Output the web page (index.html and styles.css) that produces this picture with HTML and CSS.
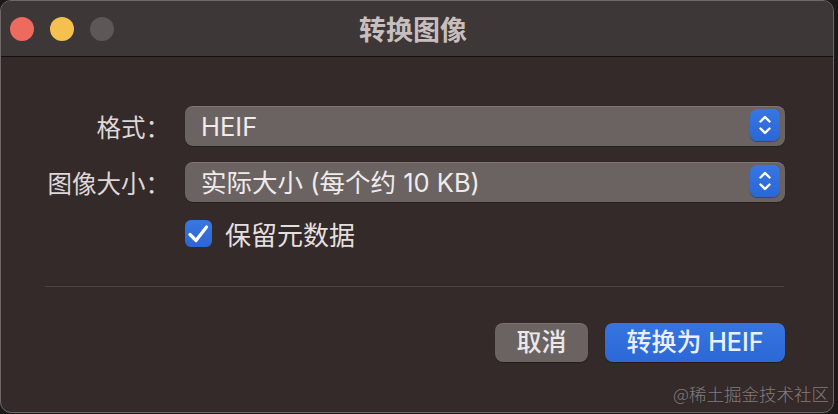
FILE: index.html
```html
<!DOCTYPE html>
<html lang="zh-CN">
<head>
<meta charset="utf-8">
<title>转换图像</title>
<link rel="stylesheet" href="styles.css">
</head>
<body>
<div class="window">
  <div class="titlebar">
    <div class="lights">
      <span class="light red"></span>
      <span class="light yellow"></span>
      <span class="light gray"></span>
    </div>
    <div class="title">转换图像</div>
  </div>
  <div class="content">
    <div class="form">
      <div class="label">格式：</div>
      <div class="popup">
        <span class="popup-text">HEIF</span>
        <span class="stepper">
          <svg viewBox="0 0 30 32" width="30" height="32"><path d="M10.5 12.5 L15 8 L19.5 12.5 M10.5 19.5 L15 24 L19.5 19.5" fill="none" stroke="#fff" stroke-width="2.4" stroke-linecap="round" stroke-linejoin="round"/></svg>
        </span>
      </div>
      <div class="label">图像大小：</div>
      <div class="popup">
        <span class="popup-text">实际大小 (每个约 10 KB)</span>
        <span class="stepper">
          <svg viewBox="0 0 30 32" width="30" height="32"><path d="M10.5 12.5 L15 8 L19.5 12.5 M10.5 19.5 L15 24 L19.5 19.5" fill="none" stroke="#fff" stroke-width="2.4" stroke-linecap="round" stroke-linejoin="round"/></svg>
        </span>
      </div>
      <div class="label"></div>
      <label class="check-row">
        <span class="checkbox">
          <svg viewBox="0 0 27 27" width="27" height="27"><path d="M5 14.5 L11 20.5 L21.5 7" fill="none" stroke="#fff" stroke-width="3.2" stroke-linecap="round" stroke-linejoin="round"/></svg>
        </span>
        <span class="check-text">保留元数据</span>
      </label>
    </div>
    <div class="separator"></div>
    <div class="buttons">
      <button class="btn cancel">取消</button>
      <button class="btn primary">转换为 HEIF</button>
    </div>
  </div>
  <div class="watermark">@稀土掘金技术社区</div>
</div>
</body>
</html>
```
FILE: styles.css
```css
* { box-sizing: border-box; }
html, body { margin: 0; padding: 0; }
body {
  width: 838px;
  height: 414px;
  background: #1d1919;
  font-family: Inter, "Noto Sans CJK SC", sans-serif;
  overflow: hidden;
}
.window {
  position: relative;
  width: 834px;
  height: 413px;
  background: #342a2a;
  border: 1px solid #6f6868;
  border-radius: 11px;
  overflow: hidden;
  display: flex;
  flex-direction: column;
}
.titlebar {
  position: relative;
  height: 56px;
  flex: none;
  background: #3d3737;
  border-bottom: 1px solid #141010;
  display: flex;
  align-items: center;
}
.lights {
  display: flex;
  gap: 16px;
  padding-left: 9px;
}
.light {
  width: 24px;
  height: 24px;
  border-radius: 50%;
  display: block;
}
.red { background: #ec6a5e; }
.yellow { background: #f4c04f; }
.gray { background: #5d5757; }
.title {
  position: absolute;
  left: 0;
  right: 0;
  top: 0;
  height: 55px;
  line-height: 55px;
  text-align: center;
  font-family: "Noto Sans CJK SC", sans-serif;
  font-weight: 700;
  font-size: 27px;
  color: #c7bfbf;
  padding-right: 8px;
}
.content {
  padding: 49px 50px 0 44px;
  display: flex;
  flex-direction: column;
}
.form {
  display: grid;
  grid-template-columns: 124px 600px;
  column-gap: 16px;
  row-gap: 16px;
  align-items: center;
}
.label {
  text-align: right;
  font-family: "Noto Sans CJK SC", sans-serif;
  font-size: 24.5px;
  color: #ddd7d7;
  margin-right: -1px;
  white-space: nowrap;
}
.popup {
  height: 40px;
  border-radius: 8px;
  background: #6b6262;
  box-shadow: inset 0 1px 0 rgba(255,255,255,0.12), 0 1px 1px rgba(0,0,0,0.25);
  display: flex;
  align-items: center;
  justify-content: space-between;
  padding-left: 16px;
  padding-right: 5px;
}
.popup-text {
  font-family: Inter, "Noto Sans CJK SC", sans-serif;
  font-size: 25.5px;
  color: #efebeb;
  line-height: 1;
  padding-top: 1px;
}
.stepper {
  width: 30px;
  height: 32px;
  border-radius: 7px;
  background: linear-gradient(#3776e4, #2b66d4);
  box-shadow: 0 1px 1px rgba(0,0,0,0.3);
  display: block;
  margin-top: -3px;
}
.stepper svg { display: block; }
.check-row {
  grid-column: 2;
  display: flex;
  align-items: center;
  gap: 13px;
  margin-top: 2px;
}
.checkbox {
  width: 27px;
  height: 27px;
  border-radius: 6px;
  background: linear-gradient(#3877e4, #2c66d2);
  display: block;
}
.checkbox svg { display: block; }
.check-text {
  font-family: "Noto Sans CJK SC", sans-serif;
  font-size: 26px;
  color: #e4dfdf;
  line-height: 1;
}
.separator {
  height: 1px;
  background: #4c4343;
  margin-top: 39px;
  width: 739px;
}
.buttons {
  display: flex;
  justify-content: flex-end;
  gap: 17px;
  margin-top: 36px;
  width: 740px;
}
.btn {
  height: 39px;
  border: none;
  border-radius: 8px;
  font-family: Inter, "Noto Sans CJK SC", sans-serif;
  font-size: 25px;
  font-weight: 500;
  padding: 0;
  line-height: 39px;
}
.cancel {
  width: 93px;
  background: #6b6262;
  color: #ece8e8;
  box-shadow: inset 0 1px 0 rgba(255,255,255,0.1), 0 1px 1px rgba(0,0,0,0.3);
}
.primary {
  width: 180px;
  background: linear-gradient(#3675e0, #2c68d6);
  color: #eaf0fb;
  box-shadow: 0 1px 1px rgba(0,0,0,0.3);
}
.watermark {
  position: absolute;
  right: 4px;
  bottom: 6px;
  font-family: "Noto Sans CJK SC", sans-serif;
  font-weight: 300;
  font-size: 17.5px;
  color: rgba(200,192,192,0.55);
}
```
